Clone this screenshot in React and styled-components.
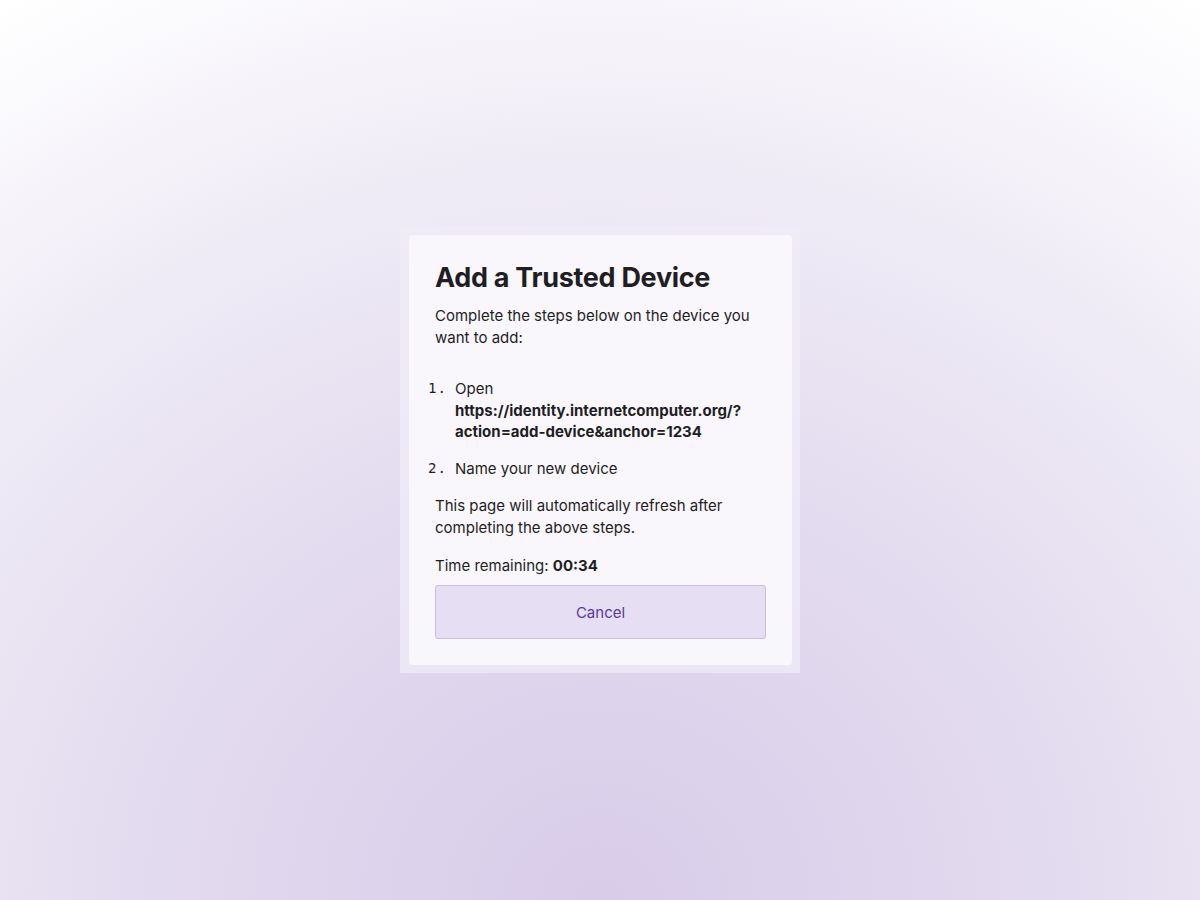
import React from 'react';
import styled, { createGlobalStyle } from 'styled-components';

const GlobalStyle = createGlobalStyle`
  html, body {
    margin: 0;
    padding: 0;
  }
  body {
    font-family: Inter, "Noto Sans", sans-serif;
    color: #1f1e24;
  }
`;

const Page = styled.div`
  width: 100%;
  height: 900px;
  display: flex;
  align-items: center;
  justify-content: center;
  background: radial-gradient(ellipse 1150px 1050px at 600px 900px, #d8cce9 0%, #e3dbef 40%, #efebf6 70%, #fbfafd 92%, #ffffff 100%);
`;

const Frame = styled.div`
  width: 383px;
  padding: 8px 8px 8px 9px;
  background: rgba(240, 236, 247, 0.75);
`;

const Card = styled.div`
  background: rgba(250, 249, 252, 0.85);
  border-radius: 4px;
  padding: 25px 26px 26px 26px;
`;

const Title = styled.h1`
  margin: 0 0 9px;
  font-size: 27px;
  font-weight: 700;
  line-height: 36px;
  letter-spacing: -0.3px;
`;

const Text = styled.p`
  margin: ${p => p.$mb || '0'};
  font-size: 15px;
  line-height: 22px;
`;

const Steps = styled.ol`
  list-style: none;
  margin: 29px 0 16px -7px;
  padding: 0;
  display: flex;
  flex-direction: column;
  gap: 15px;
`;

const Step = styled.li`
  display: grid;
  grid-template-columns: 27px 1fr;
  font-size: 15px;
  line-height: 21.5px;
`;

const Marker = styled.span`
  font-family: "DejaVu Sans Mono", "Liberation Mono", monospace;
  font-size: 14px;
  letter-spacing: 1px;
`;

const Link = styled.strong`
  font-weight: 700;
  display: block;
`;

const Button = styled.button`
  width: 100%;
  height: 54px;
  margin-top: 8px;
  border: 1px solid #cbbbe9;
  border-radius: 3px;
  background: #e6def2;
  color: #5b3a9a;
  font-family: inherit;
  font-size: 15px;
  cursor: pointer;
`;

export default function App() {
  return (
    <>
      <GlobalStyle />
      <Page>
        <Frame>
          <Card>
            <Title>Add a Trusted Device</Title>
            <Text>Complete the steps below on the device you want to add:</Text>
            <Steps>
              <Step>
                <Marker>1.</Marker>
                <div>
                  Open
                  <Link>https://identity.internetcomputer.org/?action=add-device&amp;anchor=1234</Link>
                </div>
              </Step>
              <Step>
                <Marker>2.</Marker>
                <div>Name your new device</div>
              </Step>
            </Steps>
            <Text $mb="0 0 16px">This page will automatically refresh after completing the above steps.</Text>
            <Text>Time remaining: <strong>00:34</strong></Text>
            <Button>Cancel</Button>
          </Card>
        </Frame>
      </Page>
    </>
  );
}
